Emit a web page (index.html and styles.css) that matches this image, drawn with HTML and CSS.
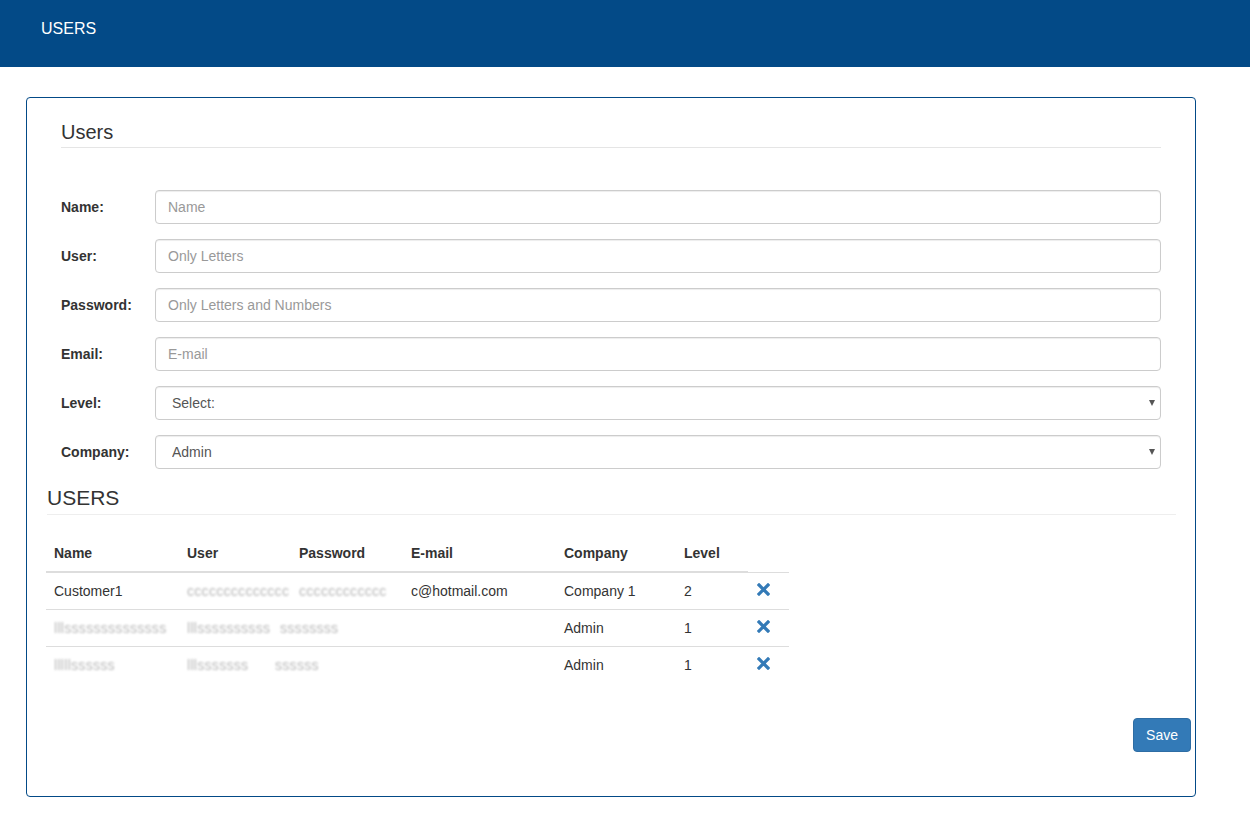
FILE: index.html
```html
<!DOCTYPE html>
<html>
	<head>
		<title>Users</title>
		<meta charset="utf-8">
		<meta name="viewport" content="width=device-width,initial-scale=1.0">
		<link rel="stylesheet" href="styles.css">
	</head>
	<body>
		<div class="topbar">USERS</div>

		<div class="panel">
			<h4 class="panel-title">Users</h4>

			<form class="user-form">
				<div class="form-row">
					<label for="name">Name:</label>
					<input type="text" id="name" class="field" placeholder="Name">
				</div>
				<div class="form-row">
					<label for="user">User:</label>
					<input type="text" id="user" class="field" placeholder="Only Letters">
				</div>
				<div class="form-row">
					<label for="password">Password:</label>
					<input type="text" id="password" class="field" placeholder="Only Letters and Numbers">
				</div>
				<div class="form-row">
					<label for="email">Email:</label>
					<input type="text" id="email" class="field" placeholder="E-mail">
				</div>
				<div class="form-row">
					<label for="level">Level:</label>
					<div class="select-wrap">
						<select id="level" class="field">
							<option>Select:</option>
							<option>1</option>
							<option>2</option>
						</select>
					</div>
				</div>
				<div class="form-row">
					<label for="company">Company:</label>
					<div class="select-wrap">
						<select id="company" class="field">
							<option>Admin</option>
							<option>Company 1</option>
						</select>
					</div>
				</div>
			</form>

			<h3 class="list-title">USERS</h3>

			<table class="grid">
				<thead>
					<tr>
						<th class="c-name">Name</th>
						<th class="c-user">User</th>
						<th class="c-pass">Password</th>
						<th class="c-mail">E-mail</th>
						<th class="c-comp">Company</th>
						<th class="c-level">Level</th>
					</tr>
				</thead>
				<tbody>
					<tr>
						<td>Customer1</td>
						<td><span class="hidden-val">cccccccccccccc</span></td>
						<td><span class="hidden-val">cccccccccccc</span></td>
						<td>c@hotmail.com</td>
						<td>Company 1</td>
						<td>2</td>
						<td><a class="del" href="#" title="Delete"><svg width="13" height="13" viewBox="0 0 13 13"><path d="M2 2L11 11M11 2L2 11" stroke="#337ab7" stroke-width="3.2" stroke-linecap="square"/></svg></a></td>
					</tr>
					<tr>
						<td><span class="hidden-val">lllssssssssssssss</span></td>
						<td><span class="hidden-val">lllssssssssss</span></td>
						<td><span class="hidden-val shift">ssssssss</span></td>
						<td></td>
						<td>Admin</td>
						<td>1</td>
						<td><a class="del" href="#" title="Delete"><svg width="13" height="13" viewBox="0 0 13 13"><path d="M2 2L11 11M11 2L2 11" stroke="#337ab7" stroke-width="3.2" stroke-linecap="square"/></svg></a></td>
					</tr>
					<tr>
						<td><span class="hidden-val">lllllssssss</span></td>
						<td><span class="hidden-val">lllsssssss</span></td>
						<td><span class="hidden-val shift-more">ssssss</span></td>
						<td></td>
						<td>Admin</td>
						<td>1</td>
						<td><a class="del" href="#" title="Delete"><svg width="13" height="13" viewBox="0 0 13 13"><path d="M2 2L11 11M11 2L2 11" stroke="#337ab7" stroke-width="3.2" stroke-linecap="square"/></svg></a></td>
					</tr>
				</tbody>
			</table>

			<div class="actions">
				<button type="button" class="btn-save">Save</button>
			</div>
		</div>
	</body>
</html>
```

FILE: styles.css
```css
html,body{margin:0;padding:0;}
body{font-family:"Liberation Sans",Arial,sans-serif;font-size:14px;line-height:20px;color:#333;background:#fff;}
*{box-sizing:border-box;}

.topbar{height:67px;background:#034a87;color:#fff;font-size:16px;line-height:20px;padding:19px 41px 0;}

.panel{width:1170px;height:700px;margin:30px 0 0 26px;border:1px solid #034a87;border-radius:4px;}

.panel-title{margin:22px 34px 0 34px;padding-bottom:3px;border-bottom:1px solid #e5e5e5;font-size:20px;line-height:24px;font-weight:normal;}

.user-form{margin:42px 34px 0 34px;}
.form-row{display:flex;align-items:center;height:34px;margin-bottom:15px;}
.form-row:last-child{margin-bottom:0;}
.form-row label{width:94px;font-weight:bold;flex:none;}
.field{flex:1;width:100%;height:34px;padding:6px 12px;border:1px solid #ccc;border-radius:4px;font-family:inherit;font-size:14px;color:#555;background:#fff;box-shadow:inset 0 1px 1px rgba(0,0,0,.075);outline:none;}
.field::placeholder{color:#999;}
select.field{-webkit-appearance:none;appearance:none;padding-left:16px;}
.select-wrap{flex:1;position:relative;}
.select-wrap::after{content:"";position:absolute;right:6px;top:14px;border-left:3.5px solid transparent;border-right:3.5px solid transparent;border-top:6px solid #555;pointer-events:none;}

.list-title{margin:16px 19px 0 20px;padding-bottom:3px;border-bottom:1px solid #eee;font-size:21px;line-height:26px;font-weight:normal;}

.grid{border-collapse:collapse;table-layout:fixed;margin:20px 0 0 19px;width:743px;}
.grid th,.grid td{padding:8px;text-align:left;vertical-align:top;line-height:20px;white-space:nowrap;}
.grid th{border-bottom:2px solid #ddd;font-weight:bold;}
.grid td{border-top:1px solid #ddd;}
.c-name{width:133px;}
.c-user{width:112px;}
.c-pass{width:112px;}
.c-mail{width:153px;}
.c-comp{width:120px;}
.c-level{width:72px;}
.del{display:inline-block;margin:2px 0 0 1px;line-height:0;}

.hidden-val{display:inline-block;color:#b8b8b8;filter:blur(1px);letter-spacing:0.3px;white-space:nowrap;}
.shift{margin-left:-19px;}
.shift-more{margin-left:-24px;}

.actions{display:flex;justify-content:flex-end;margin:35px 4px 0 0;}
.btn-save{height:34px;padding:6px 12px;background:#337ab7;border:1px solid #2e6da4;border-radius:4px;color:#fff;font-family:inherit;font-size:14px;cursor:pointer;}
```
